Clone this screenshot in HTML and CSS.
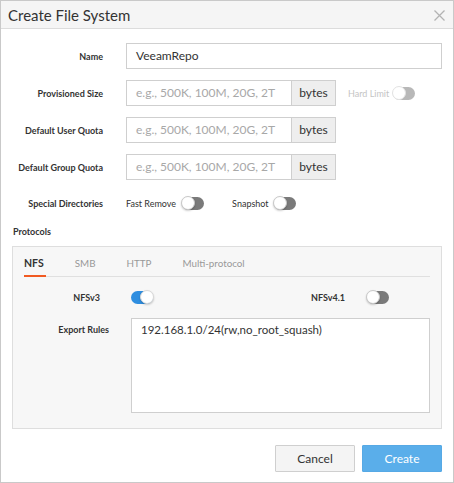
FILE: index.html
```html
<!DOCTYPE html>
<html>
<head>
<meta charset="utf-8">
<link rel="stylesheet" href="styles.css">
</head>
<body>
<div class="dialog">
  <div class="header">
    <span class="title">Create File System</span>
    <svg class="close" width="11" height="11" viewBox="0 0 11 11"><path d="M0.5 0.5L10.5 10.5M10.5 0.5L0.5 10.5" stroke="#b3b3b3" stroke-width="1.3" fill="none"/></svg>
  </div>
  <div class="content">
    <div class="form">
      <div class="row">
        <label class="lbl">Name</label>
        <div class="input full">VeeamRepo</div>
      </div>
      <div class="row">
        <label class="lbl">Provisioned Size</label>
        <div class="field">
          <div class="group">
            <div class="input ph">e.g., 500K, 100M, 20G, 2T</div>
            <div class="addon">bytes</div>
          </div>
          <span class="hard">Hard Limit</span>
          <span class="toggle off faded"><span class="knob"></span></span>
        </div>
      </div>
      <div class="row">
        <label class="lbl">Default User Quota</label>
        <div class="field">
          <div class="group">
            <div class="input ph">e.g., 500K, 100M, 20G, 2T</div>
            <div class="addon">bytes</div>
          </div>
        </div>
      </div>
      <div class="row">
        <label class="lbl">Default Group Quota</label>
        <div class="field">
          <div class="group">
            <div class="input ph">e.g., 500K, 100M, 20G, 2T</div>
            <div class="addon">bytes</div>
          </div>
        </div>
      </div>
      <div class="row short">
        <label class="lbl">Special Directories</label>
        <div class="field">
          <span class="opt">Fast Remove</span>
          <span class="toggle off"><span class="knob"></span></span>
          <span class="opt snap">Snapshot</span>
          <span class="toggle off"><span class="knob"></span></span>
        </div>
      </div>
    </div>
    <div class="section">Protocols</div>
    <div class="protobox">
      <div class="tabs">
        <span class="tab active">NFS</span>
        <span class="tab">SMB</span>
        <span class="tab">HTTP</span>
        <span class="tab">Multi-protocol</span>
      </div>
      <div class="nfsrow">
        <span class="lbl2 w1">NFSv3</span>
        <span class="toggle on"><span class="knob"></span></span>
        <span class="lbl2 w2">NFSv4.1</span>
        <span class="toggle off"><span class="knob"></span></span>
      </div>
      <div class="exportrow">
        <span class="lbl2 w3">Export Rules</span>
        <div class="textarea">192.168.1.0/24(rw,no_root_squash)</div>
      </div>
    </div>
    <div class="footer">
      <button class="btn cancel">Cancel</button>
      <button class="btn create">Create</button>
    </div>
  </div>
</div>
</body>
</html>
```
FILE: styles.css
```css
* { box-sizing: border-box; }
body {
  margin: 0;
  font-family: "Lato", "Liberation Sans", sans-serif;
  color: #333;
  background: #fff;
}
.dialog {
  width: 454px;
  height: 483px;
  border: 1px solid #c9c9c9;
  background: #fff;
}
.header {
  height: 28px;
  background: #f5f5f5;
  border-bottom: 1px solid #dcdcdc;
  display: flex;
  align-items: center;
  justify-content: space-between;
  padding: 0 8px 0 7px;
}
.title {
  font-size: 15px;
  color: #333;
}
.close { margin-top: 1px; }
.content {
  padding: 14px 11px 0 11px;
}
.form {
  display: flex;
  flex-direction: column;
  gap: 11px;
}
.row {
  display: grid;
  grid-template-columns: 91px 1fr;
  column-gap: 23px;
  align-items: center;
  height: 26px;
}
.row.short { height: 20px; margin-top: 2px; }
.lbl, .lbl2 {
  font-size: 9px;
  font-weight: 700;
  color: #333;
  text-align: right;
}
.input {
  height: 26px;
  border: 1px solid #cfcfcf;
  background: #fff;
  font-size: 12px;
  line-height: 24px;
  padding: 0 9px;
  color: #333;
}
.input.full { width: 100%; }
.field {
  display: flex;
  align-items: center;
}
.group {
  display: flex;
  width: 210px;
}
.group .input {
  width: 166px;
  color: #a8a8a8;
}
.addon {
  width: 44px;
  height: 26px;
  border: 1px solid #cfcfcf;
  border-left: none;
  background: #eee;
  font-size: 12px;
  line-height: 24px;
  text-align: center;
  color: #333;
}
.hard {
  font-size: 9px;
  color: #c4c4c4;
  margin-left: 12px;
  margin-right: 4px;
}
.opt {
  font-size: 9px;
  color: #333;
  margin-right: 6px;
}
.opt.snap { margin-left: 28px; margin-right: 5px; }
.toggle {
  position: relative;
  display: inline-block;
  width: 22px;
  height: 13px;
  border-radius: 7px;
  background: #7a7a7a;
}
.toggle .knob {
  position: absolute;
  top: -0.5px;
  left: -1px;
  width: 14px;
  height: 14px;
  border-radius: 50%;
  background: #fff;
  border: 1px solid #c8c8c8;
  box-shadow: 0 1px 2px rgba(0,0,0,0.2);
}
.toggle.on { background: #2f8ee0; }
.toggle.on .knob { left: auto; right: -1px; border-color: #d8d8d8; }
.toggle.faded { background: #b8b8b8; }
.toggle.faded .knob { border-color: #e2e2e2; box-shadow: none; }
.section {
  font-size: 9px;
  font-weight: 700;
  margin-top: 13px;
  margin-left: 1px;
  height: 11px;
}
.protobox {
  margin-top: 9px;
  height: 183px;
  border: 1px solid #dedede;
  background: #f7f7f7;
  padding: 0 11px 0 11px;
}
.tabs {
  display: flex;
  border-bottom: 1px solid #e0e0e0;
  height: 30px;
  align-items: flex-end;
}
.tab {
  font-size: 9.8px;
  color: #999;
  padding-bottom: 6px;
  margin-right: 31px;
  border-bottom: 2px solid transparent;
  margin-bottom: -1px;
}
.tab.active {
  font-size: 10.5px;
  color: #333;
  font-weight: 700;
  border-bottom-color: #f15a22;
  padding-right: 2px;
  margin-right: 29px;
}
.nfsrow {
  display: flex;
  align-items: center;
  margin-top: 13px;
  height: 14px;
}
.w1 { width: 76px; margin-right: 31px; }
.w2 { width: 192px; margin-right: 22px; }
.w3 { width: 85px; margin-right: 22px; margin-top: 6px; }
.exportrow {
  display: flex;
  align-items: flex-start;
  margin-top: 14px;
}
.textarea {
  flex: 1;
  height: 95px;
  border: 1px solid #cfcfcf;
  background: #fff;
  font-size: 11.5px;
  padding: 4px 9px;
  color: #333;
}
.footer {
  display: flex;
  justify-content: flex-end;
  gap: 7px;
  margin-top: 16px;
}
.btn {
  height: 27px;
  width: 80px;
  font-family: inherit;
  font-size: 12px;
  border-radius: 1px;
}
.cancel {
  background: #f4f4f4;
  border: 1px solid #cfcfcf;
  color: #333;
}
.create {
  background: #5aaeea;
  border: 1px solid #56a9e5;
  color: #fff;
}
```
